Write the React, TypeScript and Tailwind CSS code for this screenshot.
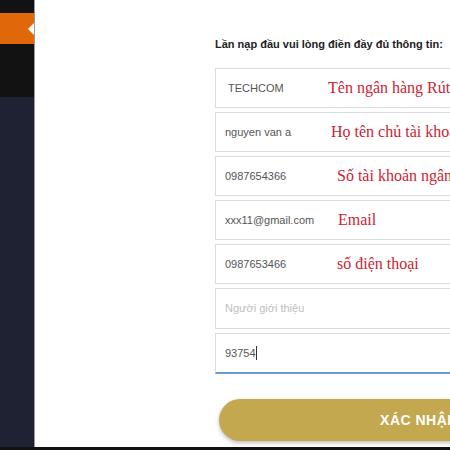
import React from "react";

const fields = [
  { value: "TECHCOM", note: "Tên ngân hàng Rút", noteClass: "left-[112px]", textClass: "pl-[12px]" },
  { value: "nguyen van a", note: "Họ tên chủ tài khoản", noteClass: "left-[115px]", textClass: "pl-[9px]" },
  { value: "0987654366", note: "Số tài khoản ngân hàng", noteClass: "left-[121px]", textClass: "pl-[9px]" },
  { value: "xxx11@gmail.com", note: "Email", noteClass: "left-[122px]", textClass: "pl-[9px]" },
  { value: "0987653466", note: "số điện thoại", noteClass: "left-[121px]", textClass: "pl-[9px]" },
];

export default function App() {
  return (
    <div className="w-[450px] h-[450px] overflow-hidden flex flex-col bg-white font-['Liberation_Sans',Arial,sans-serif]">
      <div className="flex flex-1 min-h-0">
        {/* sidebar */}
        <div className="w-[35px] shrink-0 flex flex-col border-r border-[#9a9a9a]">
          <div className="h-[97px] bg-[#121212] pt-[13px]">
            <div className="relative h-[31px] bg-[#e1680a]">
              <div className="absolute right-0 top-[10px] w-0 h-0 border-y-[6px] border-y-transparent border-r-[6px] border-r-white" />
            </div>
          </div>
          <div className="flex-1 bg-[#1f2233]" />
        </div>

        {/* form */}
        <div className="flex-1 min-w-0 overflow-hidden pl-[180px] pt-[38px]">
          <div className="w-[600px]">
            <p className="text-[11px] leading-[13px] font-bold text-[#222]">
              Lần nạp đầu vui lòng điền đầy đủ thông tin:
            </p>
            <div className="mt-[17px] flex flex-col gap-[4px]">
              {fields.map((f) => (
                <div
                  key={f.value}
                  className="relative h-[40px] border border-[#dcdcdc] flex items-center text-[11px] text-[#555]"
                >
                  <span className={f.textClass}>{f.value}</span>
                  <span
                    className={`absolute ${f.noteClass} top-1/2 -translate-y-1/2 text-[16px] text-[#cc2433] font-['Liberation_Serif','Times_New_Roman',serif] whitespace-nowrap`}
                  >
                    {f.note}
                  </span>
                </div>
              ))}
              <div className="h-[41px] border border-[#dcdcdc] flex items-center text-[11px] text-[#bdbdbd]">
                <span className="pl-[9px]">Người giới thiệu</span>
              </div>
              <div className="h-[41px] border border-[#dcdcdc] border-b-2 border-b-[#6b9bd2] flex items-center text-[11px] text-[#555]">
                <span className="pl-[9px]">93754</span>
                <span className="w-px h-[14px] bg-[#333]" />
              </div>
            </div>
            <div className="mt-[25px] ml-[4px] w-[400px] h-[42px] rounded-full bg-[#c3a84f] shadow-[0_2px_4px_rgba(0,0,0,0.25)] flex items-center justify-center text-white font-bold text-[14px] tracking-[0.5px]">
              XÁC NHẬN
            </div>
          </div>
        </div>
      </div>
      <div className="h-[3px] bg-[#111] shrink-0" />
    </div>
  );
}
